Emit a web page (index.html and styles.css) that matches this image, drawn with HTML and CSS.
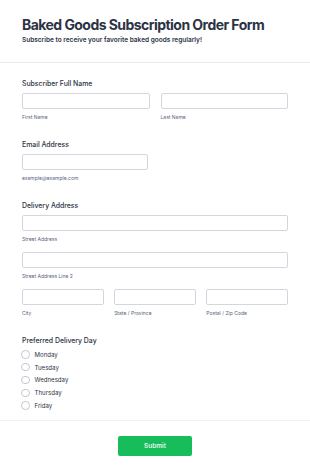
FILE: index.html
```html
<!DOCTYPE html>
<html lang="en">
<head>
    <meta charset="UTF-8">
    <meta name="viewport" content="width=device-width, initial-scale=1.0">
    <title>Baked Goods Subscription Order Form</title>
    <link rel="stylesheet" href="styles.css">
</head>
<body>
    <div class="header">
        <h1>Baked Goods Subscription Order Form</h1>
        <p class="subtitle">Subscribe to receive your favorite baked goods regularly!</p>
    </div>

    <form class="form">
        <div class="field">
            <div class="label">Subscriber Full Name</div>
            <div class="row two">
                <div>
                    <input class="input" type="text">
                    <div class="sublabel">First Name</div>
                </div>
                <div>
                    <input class="input" type="text">
                    <div class="sublabel">Last Name</div>
                </div>
            </div>
        </div>

        <div class="field">
            <div class="label">Email Address</div>
            <input class="input email" type="email">
            <div class="sublabel">example@example.com</div>
        </div>

        <div class="field">
            <div class="label">Delivery Address</div>
            <input class="input" type="text">
            <div class="sublabel">Street Address</div>
            <input class="input spaced" type="text">
            <div class="sublabel">Street Address Line 2</div>
            <div class="row three spaced">
                <div>
                    <input class="input" type="text">
                    <div class="sublabel">City</div>
                </div>
                <div>
                    <input class="input" type="text">
                    <div class="sublabel">State / Province</div>
                </div>
                <div>
                    <input class="input" type="text">
                    <div class="sublabel">Postal / Zip Code</div>
                </div>
            </div>
        </div>

        <div class="field">
            <div class="label days">Preferred Delivery Day</div>
            <label class="radio"><span class="circle"></span>Monday</label>
            <label class="radio"><span class="circle"></span>Tuesday</label>
            <label class="radio"><span class="circle"></span>Wednesday</label>
            <label class="radio"><span class="circle"></span>Thursday</label>
            <label class="radio"><span class="circle"></span>Friday</label>
        </div>
    </form>

    <div class="footer">
        <button class="submit" type="button">Submit</button>
    </div>
</body>
</html>
```

FILE: styles.css
```css
body {
    margin: 0;
    font-family: Inter, "Noto Sans", Arial, sans-serif;
    color: #2c3345;
    background: #fff;
}
.header {
    padding: 16px 22px 17px;
    border-bottom: 1px solid #eaebef;
}
h1 {
    margin: 0;
    font-size: 14px;
    line-height: 18px;
    font-weight: 700;
    letter-spacing: -0.55px;
    white-space: nowrap;
}
.subtitle {
    margin: 2px 0 0;
    font-size: 6.5px;
    line-height: 9px;
    font-weight: 600;
    color: #2c3345;
}
.form {
    padding: 16px 22px 8px;
    border-bottom: 1px solid #f1f2f4;
}
.field {
    margin-bottom: 19px;
}
.field:last-child {
    margin-bottom: 0;
}
.label {
    font-size: 6.9px;
    line-height: 10px;
    font-weight: 500;
    margin-bottom: 4px;
}
.label.days {
    margin-bottom: 2px;
}
.input {
    display: block;
    box-sizing: border-box;
    width: 100%;
    height: 16px;
    margin: 0;
    border: 1px solid #d3d6de;
    border-radius: 2px;
    background: #fff;
}
.input.email {
    width: 126px;
}
.spaced {
    margin-top: 9px;
}
.sublabel {
    margin-top: 5px;
    font-size: 5px;
    line-height: 7px;
    color: #57647e;
}
.row {
    display: grid;
}
.row.two {
    grid-template-columns: 1fr 1fr;
    gap: 11px;
}
.row.three {
    grid-template-columns: 1fr 1fr 1fr;
    gap: 10.5px;
}
.radio {
    display: flex;
    align-items: center;
    height: 12.8px;
    font-size: 6.1px;
    color: #2c3345;
}
.circle {
    box-sizing: border-box;
    width: 8.5px;
    height: 8.5px;
    margin-left: -1px;
    margin-right: 5px;
    border: 1px solid #c3c8d1;
    border-radius: 50%;
}
.footer {
    padding-top: 11px;
    text-align: center;
}
.submit {
    width: 74px;
    height: 20px;
    border: none;
    border-radius: 2px;
    background: #18bd5b;
    color: #fff;
    font-family: Inter, "Noto Sans", Arial, sans-serif;
    font-size: 6.5px;
    font-weight: 500;
}
```
